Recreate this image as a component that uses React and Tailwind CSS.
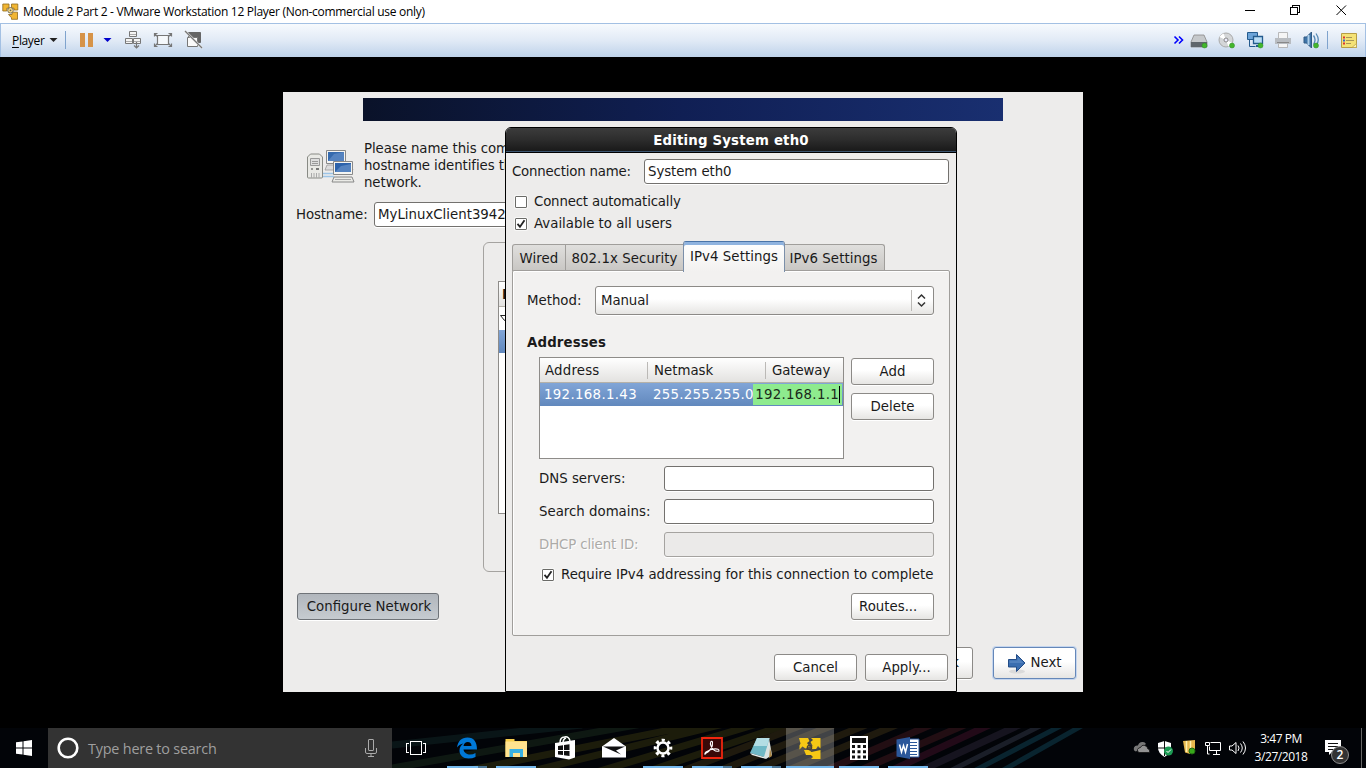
import React from "react";

const svg = "block shrink-0";

function VmLogo() {
  return (
    <svg className={svg} width="17" height="17" viewBox="0 0 17 17">
      <g fill="#f2b632" stroke="#8f6a1c" strokeWidth=".8">
        <path d="M.8 1H7v4.200H4.800V8H.8zM9.500 1H15.800v6H12V5.200H9.500zM6.500 11.500H10v-2.300h5.500V16.300H9.500v-1.500z" />
      </g>
      <circle cx="8.500" cy="7.300" r="2.800" fill="#f8dc85" stroke="#77705f" />
      <circle cx="8.500" cy="7.300" r=".9" fill="#665" />
    </svg>
  );
}

function Check({ on }) {
  return (
    <span className="block size-[12px] shrink-0 rounded-[1px] border border-[#6b6b68] bg-white shadow-[0_0_0_1px_#f8f8f7]">
      {on && (
        <svg className={svg} width="10" height="10" viewBox="0 0 10 10">
          <path d="M1.500 4.800 4 7.800 8.500 1.300" fill="none" stroke="#222" strokeWidth="1.800" />
        </svg>
      )}
    </span>
  );
}

function Btn({ children, className = "" }) {
  return (
    <div className={"flex items-center justify-center rounded-[3px] border border-[#8c8a87] bg-gradient-to-b from-white from-45% to-[#e6e5e3] pb-px shadow-[0_1px_0_#fff] " + className}>
      {children}
    </div>
  );
}

function Field({ children, className = "" }) {
  return <div className={"flex h-[25px] items-center rounded-[3px] border pb-px pl-[3px] shadow-[0_1px_0_#fff] " + className}>{children}</div>;
}

function Dot({ x = 12, y = 12 }) {
  return <circle cx={x} cy={y} r="2.500" fill="#43b62c" stroke="#2a8a25" strokeWidth=".5" />;
}

function TitleBar() {
  return (
    <div className="flex h-[23px] items-center bg-white">
      <div className="ml-[2px]"><VmLogo /></div>
      <div className="ml-[4px] grow whitespace-nowrap font-['Open_Sans',sans-serif] text-[12px] tracking-[-0.290px] text-black">Module 2 Part 2 - VMware Workstation 12 Player (Non-commercial use only)</div>
      <svg className={svg} width="130" height="23" viewBox="0 0 130 23" fill="none" stroke="#000">
        <path d="M9 10.500h10M54.500 7.500h7v7h-7zM56.500 7.500v-2h7v7h-2" shapeRendering="crispEdges" />
        <path d="m100.500 5.500 9.500 9.500m0-9.500-9.500 9.500" />
      </svg>
    </div>
  );
}

function ToolBar() {
  return (
    <div className="flex h-[34px] items-center border-x border-t border-[#a3c0e3] bg-gradient-to-b from-[#f7fafd] via-[#e1eaf6] to-[#bfd3ea]">
      <div className="ml-[11px] w-[34px] font-['Open_Sans',sans-serif] text-[12px] tracking-[-0.350px] text-black"><span className="underline underline-offset-2">P</span>layer</div>
      <svg className={svg} width="160" height="32" viewBox="46 25 160 32">
        <path d="M49.500 38h8l-4 4z" fill="#222" />
        <path d="M65.500 31v18" stroke="#7fa3cd" />
        <path d="M80 33h5v14h-5zM88 33h5v14h-5z" fill="#d69348" />
        <path d="M103.500 38h8l-4 4z" fill="#00c" />
        <g fill="#f5f5f5" stroke="#777">
          <path d="M129.500 31.500h7v5h-7zM125.500 38.500h7v5h-7zM133.500 38.500h7v5h-7z" />
          <path d="M130 34.500h6M126 41.500h6m2 0h6" stroke="#aaa" />
          <path d="M136.500 42v6m-2.500-2.500 2.500 2.500 2.500-2.500" fill="none" strokeWidth="1.200" />
        </g>
        <g fill="none" stroke="#777" strokeWidth="1.200">
          <path d="M157.500 35.500h11v9h-11z" fill="#f5f8fb" />
          <path d="M154.500 36.500v-3h3m-3 0 3 3M168.500 33.500h3v3m0-3-3 3M154.500 43.500v3h3m-3 0 3-3M171.500 43.500v3h-3m3 0-3-3" />
        </g>
        <path d="M188.500 32.500h12v10h-12z" fill="#666" stroke="#666" />
        <path d="M187.500 37.500h10v9h-10z" fill="#fafafa" stroke="#777" />
        <path d="m185 31 17 17" stroke="#eee" strokeWidth="2.400" />
        <path d="m185 31 17 17" stroke="#777" strokeWidth="1.200" />
      </svg>
      <div className="grow" />
      <svg className={svg} width="195" height="32" viewBox="1170 25 195 32">
        <path d="m1174.500 36.500 3.500 3.500-3.500 3.500m4.500-7 3.500 3.500-3.500 3.500" fill="none" stroke="#00f" strokeWidth="1.600" />
        <path d="m1194 35 10 0 3 7v5h-16v-5z" fill="#c6c9cc" stroke="#888" strokeWidth=".8" />
        <path d="M1191 42h16v5h-16z" fill="#5f666c" />
        <Dot x={1204.500} y={45.500} />
        <circle cx="1226" cy="40" r="7" fill="#d4d6d8" stroke="#aaa" />
        <path d="m1226 40-6.500-3a7 7 0 0 1 4-3.600zm0 0 6.500 3a7 7 0 0 1-4 3.600z" fill="#fff" />
        <circle cx="1226" cy="40" r="2" fill="#eef" stroke="#888" />
        <Dot x={1232} y={45.500} />
        <path d="M1247.500 32.500h10v7h-10z" fill="#6ba3d8" stroke="#245b8e" />
        <path d="M1249.500 40v6.500h6" fill="none" stroke="#245b8e" />
        <path d="M1253.500 36.500h9v7h-9z" fill="#b9dcf5" stroke="#245b8e" strokeWidth="1.300" />
        <path d="M1256 46h6" stroke="#245b8e" strokeWidth="2" />
        <Dot x={1260.500} y={45.500} />
        <path d="M1278.500 32.500h9v6h-9zM1278.500 43.500h9v4h-9z" fill="#f5f5f5" stroke="#aaa" strokeWidth=".8" />
        <path d="M1275 38h16v6h-16z" fill="#b8bcc1" />
        <path d="M1277 42.500h12" stroke="#888" />
        <path d="M1304 37h2.500l5-5v16l-5-5h-2.500z" fill="#3f74a8" stroke="#315a83" />
        <path d="M1308.500 35v10" stroke="#afd0eb" strokeWidth="2" />
        <path d="M1313.500 35.500q3 4 0 9M1316 33.500q4.500 6.500 0 12" fill="none" stroke="#5589b5" strokeWidth="1.300" />
        <Dot x={1316} y={45.500} />
        <path d="M1327.500 31v18" stroke="#7fa3cd" />
        <path d="M1341.500 33.500h15v14h-15z" fill="#f4e276" stroke="#b69d45" />
        <path d="M1352 47.500h4.500v-4z" fill="#fff4ae" stroke="#b69d45" strokeWidth=".7" />
        <path d="M1343 37.500h2M1343 43.500h2" stroke="#d33" strokeWidth="2" />
        <path d="M1343 40.500h2" stroke="#36c" strokeWidth="2" />
        <path d="M1346 37.500h6M1346 40.500h8M1346 43.500h5" stroke="#a79556" strokeWidth="1" />
      </svg>
    </div>
  );
}

function ComputersIcon() {
  return (
    <svg className={svg} width="50" height="36" viewBox="306 148 50 36">
      <path d="M322 173.500h12M322 176.500h12" fill="none" stroke="#9cc4e6" strokeWidth="1.500" />
      <path d="m307.500 157 3-3h9l3 3v20q0 1-1 1h-13q-1 0-1-1z" fill="#e9e9e5" stroke="#888a84" />
      <path d="M310.500 158.500h9v7h-9z" fill="#ddd" stroke="#999" />
      <path d="M312 161.500h6M312 163.500h6" stroke="#999" />
      <path d="M311.500 173v5M314 173v5M316.500 173v5M319 173v5" stroke="#aaa" />
      <circle cx="312" cy="169" r="1" fill="#777" /><path d="M316 169h3" stroke="#777" strokeWidth="2" />
      <path d="m327 165 24 0 2 5h-28z" fill="#ddd" stroke="#999" strokeWidth=".8" />
      <path d="M326.500 150.500h19v13h-19z" fill="#f5f5f2" stroke="#888" />
      <path d="M328 152h16v9h-16z" fill="#356aae" />
      <path d="m328 161 6-7 10-2v9z" fill="#5583c0" />
      <path d="M333.500 161.500h19v13h-19z" fill="#f5f5f2" stroke="#888" />
      <path d="M335 163h16v9h-16z" fill="#2c62ab" />
      <path d="m335 172 6-6 10-2v8z" fill="#5583c0" />
      <path d="m334 177-2 5h22l-2-5z" fill="#ebebe7" stroke="#888" />
      <path d="M335 179.500h16" stroke="#aaa" />
    </svg>
  );
}

function Tab({ children, className }) {
  return <div className={"flex h-[27px] shrink-0 items-center justify-center whitespace-nowrap border border-b-0 border-[#a09e9b] bg-gradient-to-b from-[#e0dfdd] to-[#c8c6c3] tracking-[0.070px] " + className}>{children}</div>;
}

function FormRow({ label, off }) {
  return (
    <div className="mb-[8px] flex h-[25px] items-center justify-between">
      <span className={off ? "pb-px tracking-[-0.130px] text-[#acaba8] [text-shadow:1px_1px_0_#fff]" : "pb-px"}>{label}</span>
      <Field className={off ? "w-[270px] border-[#a5a3a0] bg-[#ebeae9]" : "w-[270px] border-[#73716e] bg-white"} />
    </div>
  );
}

function Dialog() {
  return (
    <div className="absolute left-[222px] top-[35px] flex h-[565px] w-[452px] flex-col rounded-t-[6px] border border-black bg-[#edeceb]">
      <div className="flex h-[25px] shrink-0 items-center justify-center rounded-t-[5px] border-b border-black bg-gradient-to-b from-[#3c3c3c] via-[#2c2c2c] to-[#181818] font-bold tracking-[0.180px] text-white shadow-[inset_0_-1px_0_#3c5570]">Editing System eth0</div>
      <div className="ml-[6px] mt-[6px] flex h-[25px] w-[437px] items-center justify-between">
        <span className="pb-px tracking-[-0.200px]">Connection name:</span>
        <Field className="w-[305px] border-[#73716e] bg-white tracking-[-0.080px]">System eth0</Field>
      </div>
      <div className="ml-[9px] mt-[7px] flex h-[22px] items-center gap-[7px]"><Check /><span className="pb-[2px] tracking-[-0.170px]">Connect automatically</span></div>
      <div className="ml-[9px] flex h-[22px] items-center gap-[7px]"><Check on /><span className="pb-[2px]">Available to all users</span></div>
      <div className="ml-[6px] mt-[6px] flex h-[30px] items-end">
        <Tab className="w-[54px] rounded-tl-[3px]">Wired</Tab>
        <Tab className="-ml-px w-[119px]">802.1x Security</Tab>
        <div className="z-10 -mb-px -ml-px flex h-[31px] w-[102px] shrink-0 items-center justify-center whitespace-nowrap rounded-t-[3px] border border-b-0 border-[#7b8fa9] border-t-[#4a74a8] bg-gradient-to-b from-white to-[#f2f1f0] pb-[2px] tracking-[0.070px] shadow-[inset_0_3px_0_#8fb3df]">IPv4 Settings</div>
        <Tab className="-ml-px w-[101px] rounded-tr-[3px] pr-[2px]">IPv6 Settings</Tab>
      </div>
      <div className="-mt-px ml-[6px] flex h-[366px] w-[438px] shrink-0 flex-col rounded-[2px] border border-[#a09e9b] bg-[#f2f1f0] pl-[14px] pr-[15px] pt-[15px] shadow-[inset_1px_1px_0_#fff]">
        <div className="flex h-[29px] shrink-0 items-center justify-between">
          <span>Method:</span>
          <div className="flex h-[29px] w-[339px] items-center rounded-[3px] border border-[#8c8a87] bg-gradient-to-b from-white from-45% to-[#e6e5e3] pl-[5px] shadow-[0_1px_0_#fff]">
            <span className="grow tracking-[-0.100px]">Manual</span>
            <svg className={svg} width="22" height="21" viewBox="0 0 22 21" fill="none"><path d="M.5 0v21" stroke="#bbb9b6" /><path d="m7 8.500 3.500-3.500 3.500 3.500m-7 4 3.500 3.500 3.500-3.500" stroke="#333" strokeWidth="1.500" /></svg>
          </div>
        </div>
        <div className="mt-[19px] h-[18px] shrink-0 font-bold leading-[18px] tracking-[0.140px]">Addresses</div>
        <div className="ml-[12px] mt-[5px] flex h-[102px] shrink-0 justify-between">
          <div className="h-[102px] w-[305px] border border-[#8e8c89] bg-white">
            <div className="flex h-[25px] items-center border-b border-[#b5b1a8] bg-gradient-to-b from-white to-[#e3e2e0]">
              <span className="flex h-[17px] w-[108px] items-center border-r border-[#bbb9b6] pl-[5px] tracking-[0.200px]">Address</span>
              <span className="flex h-[17px] w-[118px] items-center border-r border-[#bbb9b6] pl-[6px]">Netmask</span>
              <span className="flex h-[17px] items-center pl-[6px] tracking-[-0.100px]">Gateway</span>
            </div>
            <div className="flex h-[23px] items-center bg-gradient-to-b from-[#81a5d7] to-[#6188bd] text-white">
              <span className="w-[109px] pl-[4px] tracking-[0.330px]">192.168.1.43</span>
              <span className="w-[104px] whitespace-nowrap pl-[4px] tracking-[0.250px]">255.255.255.0</span>
              <span className="flex h-[21px] w-[89px] items-center justify-end bg-[#8eeb8e] pr-[2px] text-[#1b2a1b]"><span className="tracking-[0.300px]">192.168.1.1</span><i className="block h-[17px] w-px bg-black" /></span>
            </div>
          </div>
          <div className="flex flex-col gap-[8px] pt-px">
            <Btn className="h-[27px] w-[83px]">Add</Btn>
            <Btn className="h-[27px] w-[83px]">Delete</Btn>
          </div>
        </div>
        <div className="ml-[12px] mt-[7px]">
          <FormRow label="DNS servers:" />
          <FormRow label="Search domains:" />
          <FormRow label="DHCP client ID:" off />
        </div>
        <div className="ml-[15px] flex h-[20px] items-center gap-[7px] whitespace-nowrap"><Check on /><span className="pb-[2px] tracking-[-0.020px]">Require IPv4 addressing for this connection to complete</span></div>
        <Btn className="mt-[8px] h-[27px] w-[83px] self-end !justify-start pl-[7px]">Routes...</Btn>
      </div>
      <div className="mt-[18px] flex justify-end gap-[8px] pr-[8px]">
        <Btn className="h-[27px] w-[83px]">Cancel</Btn>
        <Btn className="h-[27px] w-[83px]">Apply...</Btn>
      </div>
    </div>
  );
}

function Guest() {
  return (
    <div className="relative h-[600px] w-[800px] overflow-hidden bg-[#edeceb] font-['DejaVu_Sans',sans-serif] text-[13.330px] leading-[17px] text-[#1a1a1a]">
      <div className="ml-[80px] mt-[6px] h-[23px] w-[640px] bg-gradient-to-r from-[#0a1229] via-[#101f54] to-[#192f70]" />
      <div className="ml-[23px] mt-[19px] flex h-[51px] whitespace-nowrap tracking-[-0.080px]">
        <div className="mt-[8px] w-[58px]"><ComputersIcon /></div>
        <div>Please name this com<br />hostname identifies th<br />network.</div>
      </div>
      <div className="ml-[13px] mt-[11px] flex h-[25px] items-center">
        <span className="w-[78px] pb-px tracking-[-0.120px]">Hostname:</span>
        <Field className="w-[400px] border-[#73716e] bg-white">MyLinuxClient3942</Field>
      </div>
      <div className="ml-[200px] mt-[15px] h-[330px] w-[450px] rounded-[6px] border border-[#a5a3a0] pl-[14px] pt-[38px]">
        <div className="h-[233px] w-[300px] border border-[#8e8c89] bg-white">
          <div className="h-[25px] border-b border-[#b5b1a8] bg-gradient-to-b from-white to-[#e3e2e0] pl-[3px] pt-[4px] font-bold">N</div>
          <div className="h-[23px] pl-[1px] pt-[8px]"><svg className={svg} width="9" height="7" viewBox="0 0 9 7"><path d="M.5.500h8l-4 5z" fill="#fff" stroke="#222" /></svg></div>
          <div className="h-[23px] bg-gradient-to-b from-[#81a5d7] to-[#6188bd]" />
        </div>
      </div>
      <div className="ml-[14px] mt-[21px] flex h-[27px] w-[142px] items-center justify-center rounded-[3px] border border-[#6f7378] bg-gradient-to-b from-[#b1b6bc] to-[#c6cbd0] pl-[2px] shadow-[0_1px_0_#fff]">Configure Network</div>
      <div className="mt-[27px] flex justify-end gap-[20px] pr-[7px]">
        <Btn className="h-[32px] w-[85px] !justify-end pr-[13px]">Back</Btn>
        <Btn className="h-[32px] w-[83px] !border-[#6587b8] !shadow-[0_0_0_1px_#c4d5ee]">
          <svg className={svg} width="20" height="22" viewBox="0 0 20 22"><ellipse cx="10" cy="19.500" rx="8" ry="2" fill="#dadada" /><path d="M1.500 7.500h8v-5l8.500 8.500-8.500 8.500v-4.500h-8z" fill="#3b6eb0" stroke="#234c87" /><path d="M2.500 8.500h8v-3.500l6 6h-14z" fill="#5382be" /></svg>
          <span className="ml-[3px]">Next</span>
        </Btn>
      </div>
      <Dialog />
    </div>
  );
}

function Glyph({ name }) {
  return (
    <svg className={svg} width="28" height="28" viewBox="-14 -14 28 28">
      {name === "edge" && <path d="M-10-.5C-9-7-5.500-10.500.500-10.500 7-10.500 10-6 10 1.500H-3.500C-3 5 0 6.500 3 6.500Q6 6.500 8.500 5V9Q5.500 10.500 1.500 10.500C-4 10.500-7.500 7-7.500 2.500-7.500-.5-6-3-3.500-4.500Q-7.500-4-10-.5zM-3.500-2H4.500C4.500-4.500 3-6 .8-6S-3-4.500-3.500-2z" fill="#0078d7" />}
      {name === "folder" && <g><path d="M-10.500-9h9v2H11V9h-21.500z" fill="#f8cf4c" /><path d="M-10.500-6.500H11V9h-21.500z" fill="#ffe38f" /><path d="M-6.500 9V1H7v8H4V5h-7v4z" fill="#38b1e3" /></g>}
      {name === "store" && <g><path d="m-10-5 20-3V9.500l-6 2-14-2.500z" fill="#fff" /><path d="M-5-5q0-6 4.500-6Q4-12 5-7M-2-5q0-4 3-5" fill="none" stroke="#fff" strokeWidth="1.500" /><path d="m-7-2 5-.8V2h-5zM-1-3 4.500-3.800V2H-1zM-7 3h5v4l-5-.5zM-1 3h5.500v5l-5.500-.8z" fill="#111" /></g>}
      {name === "mail" && <g><path d="M-12-1.500 0-10 12-1.500V9.500h-24z" fill="#fff" /><path d="M-11-1.500H11L2 2.500l5 4-9-4z" fill="#111" /></g>}
      {name === "gear" && <g fill="none" stroke="#fff"><circle r="5.500" strokeWidth="2.500" /><circle r="7.800" strokeWidth="3" strokeDasharray="3.100 3.025" strokeDashoffset="1.550" /></g>}
      {name === "acrobat" && <g><path d="M-10-10h20v20h-20z" fill="#3a0908" stroke="#f0260f" strokeWidth="1.800" /><path d="M-6.500 5.500C-2 3 1-1 .5-6-.5-8-2.500-6-1-2 1 2 4 4 7 3 7.500 0 0 0-6 4-8 6-7 7-6.500 5.500z" fill="none" stroke="#fff" strokeWidth="1.100" /></g>}
      {name === "notes" && <g><path d="m8-10 3 17-6 4-3-2z" fill="#d9e2e2" /><path d="m9 0 2 8-3 2z" fill="#a98546" /><path d="M-4-10H8.500L3 9l-14-4z" fill="#6fb8c6" /><path d="M-4-10H8.500l-2.500 8H-7.500z" fill="#b3dde4" /><path d="m-11 5 14 4 2 2-14-4z" fill="#e8eeee" /></g>}
      {name === "vm" && <g fill="#f6c815"><path d="m-11-10 9 0 1.500 3-2.500 2 2.500 3.500-4 2-3-2-3 3v-4l1-2z" /><path d="M1-10h9.500V.5L8-2 6 1H1l1.500-3.500L.5-6 3-8z" /><path d="m-6 2 5 0 2.500 2 9-2V11H1l2-2-2-2h-5z" /><circle cx="-.5" cy="-.5" r="2.200" fill="none" stroke="#4a4130" strokeWidth="1.200" /></g>}
      {name === "calc" && <g><path d="M-9-12H9v24H-9z" fill="#fff" /><path d="M-7-10H7v5H-7z" fill="#111" /><path d="M-5.500-3v14M0-3v14M5.500-3v14" stroke="#111" strokeWidth="3" strokeDasharray="3 2.300" /></g>}
      {name === "word" && <g><path d="M0-9h11V9H0z" fill="#fff" stroke="#2b579a" /><path d="M2-5.500h7M2-2.500h7M2 .5h7M2 3.500h7M2 6.500h7" stroke="#2b579a" /><path d="M-11.500-8.500 2-11v22l-13.500-2.500z" fill="#2b579a" /><path d="m-8.500-3.500 2 7.500 2-6.500 2 6.500 2-8" fill="none" stroke="#fff" strokeWidth="1.500" /></g>}
    </svg>
  );
}

const apps = [
  ["edge", "w-[49px]", "ml-[5px] w-[31px]", true],
  ["folder", "w-[49px]", "ml-[5px] w-[40px]"],
  ["store", "w-[49px]", ""],
  ["mail", "w-[49px]", ""],
  ["gear", "w-[49px]", "ml-[5px] w-[40px]"],
  ["acrobat", "w-[49px]", "ml-[5px] w-[31px]", true],
  ["notes", "w-[49px]", "ml-[5px] w-[31px]", true],
  ["vm", "ml-px w-[48px] bg-white/25", "w-full"],
  ["calc", "w-[49px]", "ml-[5px] w-[40px]"],
  ["word", "w-[49px]", "ml-[5px] w-[40px]"],
];

function Taskbar() {
  return (
    <div className="relative flex h-[40px] bg-[#020408] font-['Open_Sans',sans-serif] text-white">
      <svg className="absolute left-[392px] top-0" width="700" height="40" viewBox="392 0 700 40">
        <g strokeWidth="7" opacity=".2">
          <path d="m392 17 190-20" stroke="#285a54" />
          <path d="m392 40 250-44" stroke="#3f6a3c" />
          <path d="m450 46 250-50M520 46 740-8M590 46 770-8M640 46 800-8" stroke="#857b18" />
          <path d="m680 44 135-52M716 44 846-8M750 44 878-8M784 44 908-8" stroke="#927229" />
          <path d="m822 44 120-52M856 44 976-8" stroke="#a0363f" />
          <path d="m888 44 112-52" stroke="#a0265a" />
          <path d="m918 44 112-52" stroke="#68537c" />
        </g>
        <g strokeWidth="5" opacity=".28">
          <path d="m948 44 104-52" stroke="#58637c" />
          <path d="m972 44 100-52M1000 44l92-52" stroke="#1b7796" />
        </g>
      </svg>
      <div className="flex w-[48px] items-center justify-center">
        <svg className={svg} width="16" height="16" viewBox="0 0 16 16" fill="#fff"><path d="m0 2.300 6.500-.9v6.100H0zM7.500 1.200 16 0v7.500H7.500zM0 8.500h6.500v6.100L0 13.700zM7.500 8.500H16V16l-8.500-1.200z" /></svg>
      </div>
      <div className="flex w-[344px] items-center bg-[#333]">
        <svg className={"ml-[9px] " + svg} width="22" height="22" viewBox="0 0 22 22"><circle cx="11" cy="11" r="9.300" fill="none" stroke="#fff" strokeWidth="2.600" /></svg>
        <span className="ml-[9px] grow pt-px text-[14.400px] tracking-[-0.200px] text-[#9f9f9f]">Type here to search</span>
        <svg className={"mr-[15px] " + svg} width="12" height="18" viewBox="0 0 12 18" fill="none" stroke="#aaa"><rect x="3.500" y=".5" width="5" height="11" rx=".5" /><path d="M.5 9v4q0 1.500 1.500 1.500h8q1.500 0 1.500-1.500V9M6 14.500V17M3 17.500h6" /></svg>
      </div>
      <div className="relative flex w-[49px] items-center justify-center pr-[2px]">
        <svg className={svg} width="20" height="16" viewBox="0 0 20 16" fill="none" stroke="#fff" shapeRendering="crispEdges"><path d="M4.500 1.500h11v13h-11zM3 3.500H.5v9H3M17 3.500h2.500v9H17" /></svg>
      </div>
      <div className="relative flex pl-[1px]">
        {apps.map(([name, w, bar, split]) => (
          <div key={name} className={"flex h-[40px] flex-col items-center " + w}>
            <div className="flex h-[38px] items-center pt-[2px]"><Glyph name={name} /></div>
            {bar && <div className="flex w-full"><i className={"block h-[2px] bg-[#76b9ed] " + bar} />{split && <i className="block h-[2px] w-[9px] bg-[#4b7696]" />}</div>}
          </div>
        ))}
      </div>
      <div className="grow" />
      <svg className={svg} width="120" height="40" viewBox="1130 728 120 40">
        <path d="M1136 751.500q-3-1-2-4 1-2.500 4-2 1-4 5-3.500 2 0 3 2" fill="#777" />
        <path d="M1139 752.500q-2-1-1.500-3 1-2 3-2 2-4 6-1 1 1 1 2 3 1 2 4z" fill="#929292" stroke="#111" strokeWidth=".8" />
        <path d="m1158 743 6.500-2 6.500 2v5q0 5-6.500 9-6.500-4-6.500-9z" fill="#fff" /><path d="M1164.500 741v15M1158 748h13" stroke="#111" />
        <circle cx="1168.500" cy="751" r="4.500" fill="#1c9a53" /><path d="m1166.500 751 1.500 1.500 3-3" fill="none" stroke="#fff" />
        <path d="m1183 741 12-1v9l-5 5-5-1.500z" fill="#e7b84d" /><path d="M1186.500 741v11M1190.500 741v12" stroke="#fff0af" strokeWidth="1.500" /><circle cx="1192" cy="751" r="3" fill="#38a81b" stroke="#236b13" />
        <path d="M1210.500 742.500h10v8h-11v-4M1213 754.500h7M1216.500 751v3M1205.500 742.500h4v3h-4zM1207.500 746v8h2" fill="none" stroke="#fff" />
        <path d="M1229.500 746h2.500l4-3.500v11l-4-3.500h-2.500zM1238 745.500q2 2.500 0 5.500M1240.500 743.500q3.500 4.500 0 9M1243 741.500q5 6.500 0 13" fill="none" stroke="#fff" />
      </svg>
      <div className="flex w-[62px] flex-col items-center justify-center whitespace-nowrap text-[12px] leading-[18px] tracking-[-0.450px]"><span>3:47 PM</span><span>3/27/2018</span></div>
      <div className="relative flex w-[49px] items-center pl-[13px]">
        <svg className={svg} width="17" height="18" viewBox="0 0 17 18"><path d="M0 1h16v12H7l-3 3v-3H0z" fill="#fff" /><path d="M3 4.500h10M3 7.500h10M3 10.500h6" stroke="#111" /></svg>
        <span className="absolute left-[19px] top-[18px] flex size-[18px] items-center justify-center rounded-full border border-[#8d8d8d] bg-[#333] text-[12px] font-semibold leading-none">2</span>
      </div>
      <div className="mr-[4px] w-px bg-[#666]" />
    </div>
  );
}

export default function App() {
  return (
    <div className="flex h-[768px] w-[1366px] flex-col overflow-hidden bg-black">
      <TitleBar />
      <ToolBar />
      <div className="flex h-[671px] justify-center pt-[35px]"><Guest /></div>
      <Taskbar />
    </div>
  );
}
